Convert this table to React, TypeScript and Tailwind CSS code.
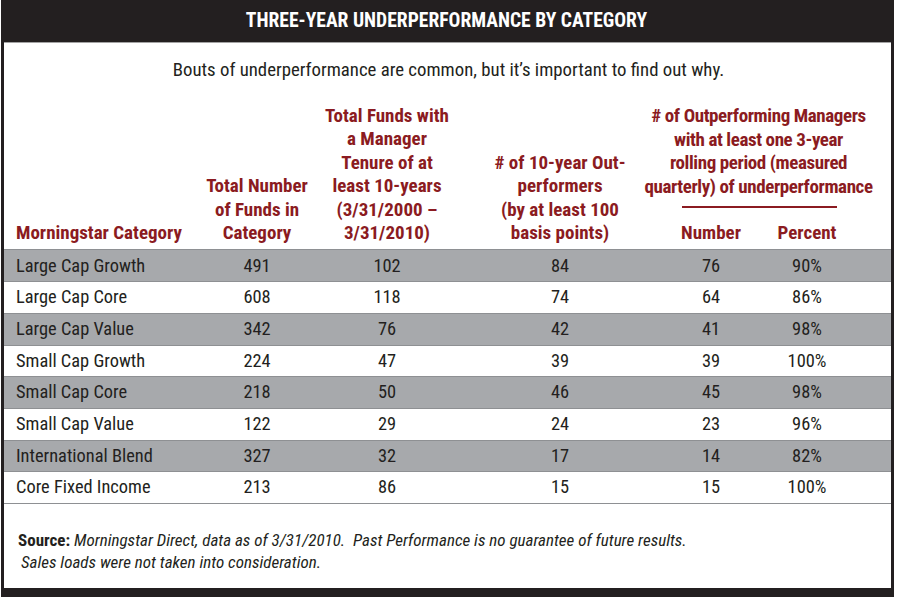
const rows: [string, string, string, string, string, string][] = [
  ["Large Cap Growth", "491", "102", "84", "76", "90%"],
  ["Large Cap Core", "608", "118", "74", "64", "86%"],
  ["Large Cap Value", "342", "76", "42", "41", "98%"],
  ["Small Cap Growth", "224", "47", "39", "39", "100%"],
  ["Small Cap Core", "218", "50", "46", "45", "98%"],
  ["Small Cap Value", "122", "29", "24", "23", "96%"],
  ["International Blend", "327", "32", "17", "14", "82%"],
  ["Core Fixed Income", "213", "86", "15", "15", "100%"],
];

const grid = "grid grid-cols-[196px_114px_146px_204px_94px_98px_1fr]";

export default function App() {
  return (
    <div className="w-[900px] h-[600px] bg-white font-['Roboto_Condensed',sans-serif] text-[#231f20]">
      <div className="ml-[1px] w-[893px] h-[597px] flex flex-col border-l-[3px] border-r-[3px] border-b-[9px] border-[#231f20]">
        <div className="h-[43px] shrink-0 bg-[#231f20] border-b border-[#a3a3a3] flex items-center justify-center">
          <span className="text-white font-bold text-[19.6px] leading-none pr-[2px]">
            THREE-YEAR UNDERPERFORMANCE BY CATEGORY
          </span>
        </div>
        <div className="pt-[16px] text-center text-[18.8px] leading-[22px] pl-[2px]">
          Bouts of underperformance are common, but it’s important to find out why.
        </div>
        <div className={`${grid} mt-[23px] items-end text-[#8b1b21] font-bold text-[19px] leading-[23.4px] pb-[5px] whitespace-nowrap`}>
          <div className="pl-[12px]">Morningstar Category</div>
          <div className="text-center">Total Number<br />of Funds in<br />Category</div>
          <div className="text-center">Total Funds with<br />a Manager<br />Tenure of at<br />least 10-years<br />(3/31/2000 –<br />3/31/2010)</div>
          <div className="text-center pr-[4px]">
            # of 10-year Out-<br />performers<br />(by at least 100<br />basis points)
          </div>
          <div className="col-span-2 flex flex-col items-center">
            <div className="text-center tracking-[-0.4px] pr-[3px]">
              # of Outperforming Managers<br />with at least one 3-year<br />rolling period (measured<br />quarterly) of underperformance
            </div>
            <div className="w-[155px] h-[2px] bg-[#8b1b21] mt-[8px] mb-[13px] mr-[2px]" />
            <div className="w-full grid grid-cols-[94px_98px]">
              <div className="text-center">Number</div>
              <div className="text-center">Percent</div>
            </div>
          </div>
          <div />
        </div>
        <div className="border-b border-[#8e9093]">
          {rows.map((r, i) => (
            <div
              key={r[0]}
              className={`${grid} h-[31.7px] items-center border-t border-[#8e9093] text-[18.4px] leading-none ${i % 2 === 0 ? "bg-[#a7a9ac]" : "bg-white"}`}
            >
              <div className="pl-[12px]">{r[0]}</div>
              <div className="text-center">{r[1]}</div>
              <div className="text-center">{r[2]}</div>
              <div className="text-center pr-[4px]">{r[3]}</div>
              <div className="text-center">{r[4]}</div>
              <div className="text-center">{r[5]}</div>
              <div />
            </div>
          ))}
        </div>
        <div className="pt-[25px] pl-[14px] text-[17px] leading-[22px]">
          <div className="whitespace-pre">
            <span className="font-bold">Source:</span>{" "}
            <span className="italic">Morningstar Direct, data as of 3/31/2010.  Past Performance is no guarantee of future results.</span>
          </div>
          <div className="italic pl-[3px]">Sales loads were not taken into consideration.</div>
        </div>
      </div>
    </div>
  );
}
